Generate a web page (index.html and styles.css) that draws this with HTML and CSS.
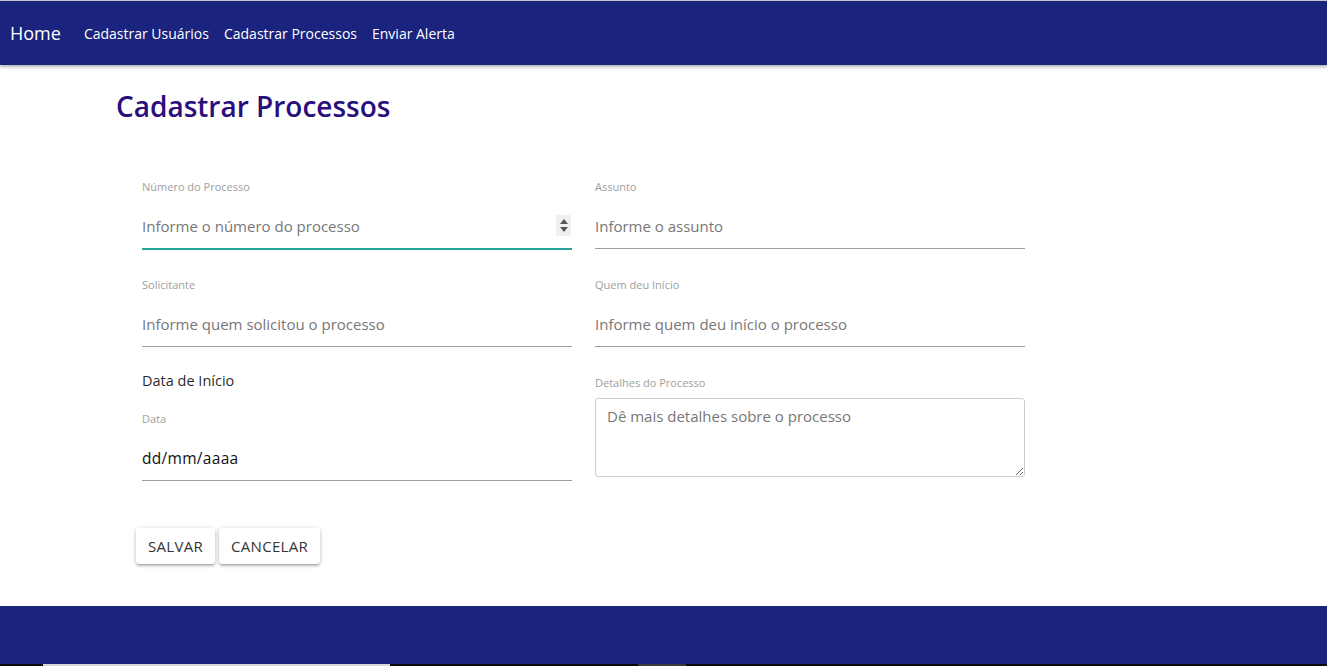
FILE: index.html
```html
<!DOCTYPE html>
<html lang="pt-BR">
<head>
<meta charset="utf-8">
<title>Cadastrar Processos</title>
<link rel="stylesheet" href="styles.css">
</head>
<body>
<div class="topline"></div>
<nav class="nav">
  <a class="brand" href="#">Home</a>
  <ul class="links">
    <li><a href="#">Cadastrar Usuários</a></li>
    <li><a href="#">Cadastrar Processos</a></li>
    <li><a href="#">Enviar Alerta</a></li>
  </ul>
</nav>
<main class="main">
  <h1 class="title">Cadastrar Processos</h1>
  <form class="form">
    <div class="grid">
      <div class="col">
        <div class="field">
          <label class="label">Número do Processo</label>
          <div class="input-wrap">
            <input class="input focused" type="text" placeholder="Informe o número do processo">
            <span class="spinner"><span class="up"></span><span class="down"></span></span>
          </div>
        </div>
        <div class="field">
          <label class="label">Solicitante</label>
          <input class="input" type="text" placeholder="Informe quem solicitou o processo">
        </div>
        <div class="subtitle">Data de Início</div>
        <div class="field">
          <label class="label">Data</label>
          <input class="input date" type="text" value="dd/mm/aaaa">
        </div>
      </div>
      <div class="col">
        <div class="field">
          <label class="label">Assunto</label>
          <input class="input" type="text" placeholder="Informe o assunto">
        </div>
        <div class="field">
          <label class="label">Quem deu Início</label>
          <input class="input" type="text" placeholder="Informe quem deu início o processo">
        </div>
        <div class="field area-field">
          <label class="label">Detalhes do Processo</label>
          <textarea class="area" placeholder="Dê mais detalhes sobre o processo"></textarea>
        </div>
      </div>
    </div>
    <div class="actions">
      <button class="btn" type="button">Salvar</button>
      <button class="btn" type="button">Cancelar</button>
    </div>
  </form>
</main>
<footer class="footer"></footer>
<div class="taskbar"><span class="tb-light"></span><span class="tb-gap"></span><span class="tb-dark"></span></div>
</body>
</html>
```
FILE: styles.css
```css
* { box-sizing: border-box; }
html, body { margin: 0; padding: 0; }
body {
  height: 100vh;
  display: flex;
  flex-direction: column;
  font-family: "Open Sans", "Noto Sans", sans-serif;
  color: rgba(0,0,0,0.87);
  background: #fff;
  overflow: hidden;
}
.topline { height: 1px; background: #c8c8c8; flex: none; }
.nav {
  flex: none;
  height: 64px;
  background: #1a237e;
  display: flex;
  align-items: center;
  padding-left: 10px;
  box-shadow: 0 2px 3px rgba(0,0,0,0.3);
  position: relative;
  z-index: 1;
}
.brand {
  color: #fff;
  text-decoration: none;
  font-size: 18px;
  margin-right: 23px;
}
.links { list-style: none; margin: 0; padding: 0; display: flex; gap: 15px; }
.links a { color: #fff; text-decoration: none; font-size: 14px; }
.main { flex: 1; padding-left: 116px; }
.title {
  margin: 23px 0 0;
  font-size: 28px;
  line-height: 36px;
  font-weight: 600;
  color: #2a0f7c;
}
.form { padding-left: 26px; margin-top: 55px; }
.grid { display: flex; gap: 23px; }
.col { width: 430px; }
.field { margin-bottom: 28px; }
.label {
  display: block;
  font-size: 11px;
  line-height: 16px;
  color: #9e9e9e;
  margin-bottom: 8px;
}
.input-wrap { position: relative; }
.input {
  display: block;
  width: 100%;
  height: 46px;
  border: none;
  border-bottom: 1px solid #9e9e9e;
  outline: none;
  padding: 0;
  font-family: inherit;
  font-size: 15px;
  color: rgba(0,0,0,0.87);
  background: transparent;
}
.input::placeholder { color: #777; }
.input.focused { border-bottom: 1px solid #26a69a; box-shadow: 0 1px 0 0 #26a69a; }
.input.date { color: #111; font-size: 15.5px; letter-spacing: 0.3px; }
.spinner {
  position: absolute;
  right: 1px;
  top: 12px;
  width: 15px;
  height: 21px;
  background: #f0f0f0;
  display: flex;
  flex-direction: column;
  align-items: center;
  justify-content: center;
  gap: 3px;
}
.up { width: 0; height: 0; border-left: 4px solid transparent; border-right: 4px solid transparent; border-bottom: 5px solid #555; }
.down { width: 0; height: 0; border-left: 4px solid transparent; border-right: 4px solid transparent; border-top: 5px solid #555; }
.subtitle {
  font-size: 14.5px;
  line-height: 20px;
  margin: -4px 0 20px;
  color: rgba(0,0,0,0.87);
}
.area-field .label { margin-bottom: 7px; }
.area {
  display: block;
  width: 100%;
  height: 79px;
  border: 1px solid #ccc;
  border-radius: 3px;
  padding: 7px 11px;
  font-family: inherit;
  font-size: 15px;
  resize: vertical;
  outline: none;
}
.area::placeholder { color: #777; }
.actions { display: flex; gap: 4px; margin-left: -6px; margin-top: 19px; }
.btn {
  height: 36px;
  padding: 0 12px;
  border: none;
  border-radius: 3px;
  background: #fff;
  font-family: inherit;
  font-size: 15px;
  letter-spacing: 0.3px;
  text-transform: uppercase;
  color: #343434;
  box-shadow: 0 2px 2px 0 rgba(0,0,0,0.14), 0 3px 1px -2px rgba(0,0,0,0.12), 0 1px 5px 0 rgba(0,0,0,0.2);
}
.footer { flex: none; height: 58px; background: #1a237e; }
.taskbar { flex: none; height: 2px; background: #0a0a0a; display: flex; }
.tb-light { width: 347px; margin-left: 43px; background: #d8d8d8; }
.tb-gap { width: 248px; }
.tb-dark { width: 48px; background: #3a3a3a; }
```
